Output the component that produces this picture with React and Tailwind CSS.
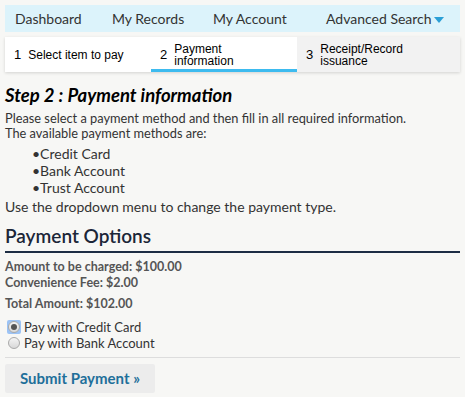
import React, { useState } from "react";

const tabs = [
  { n: "1", label: "Select item to pay", state: "done" },
  { n: "2", label: "Payment\ninformation", state: "active" },
  { n: "3", label: "Receipt/Record\nissuance", state: "todo" },
];

const Radio = ({ checked, focused }) => (
  <span
    className={
      "ml-[2px] flex h-[14px] w-[14px] items-center justify-center rounded-[2px] " +
      (focused ? "bg-[#9cc3f5]" : "")
    }
  >
    <span className="flex h-[12px] w-[12px] items-center justify-center rounded-full border border-[#a9a9a9] bg-[linear-gradient(#f4f4f4,#d8d8d8)]">
      {checked && <span className="h-[6px] w-[6px] rounded-full bg-[#555]" />}
    </span>
  </span>
);

export default function App() {
  const [method, setMethod] = useState("card");

  return (
    <div className="min-h-[397px] w-[465px] bg-[#f7f7f5] px-[5px] pt-[5px] text-[#333] font-['Lato','Open_Sans',sans-serif]">
      {/* NAV */}
      <div className="flex h-[27px] items-center bg-[#dcf3fb] text-[14px] text-[#333]">
        <span className="ml-[10px] w-[97px]">Dashboard</span>
        <span className="w-[101px]">My Records</span>
        <span className="w-[113px]">My Account</span>
        <span className="flex items-center">
          Advanced Search
          <svg width="10" height="6" viewBox="0 0 10 6" className="ml-[2px] mt-[2px]">
            <path d="M0 0h10L5 6z" fill="#2a9fd6" />
          </svg>
        </span>
      </div>

      {/* STEPS */}
      <div className="mt-[5px] flex h-[35px] shadow-[0_1px_3px_rgba(0,0,0,0.15)] font-['Liberation_Sans',Arial,sans-serif] text-[12px] leading-[12px] text-black">
        {tabs.map(t => (
          <div
            key={t.n}
            className={
              "flex w-[146px] items-center gap-[7px] pl-[9px] " +
              (t.state === "active"
                ? "border-b-[3px] border-[#3dbbef] bg-white pt-[3px]"
                : t.state === "todo"
                ? "flex-1 bg-[#f2f2f2]"
                : "bg-white")
            }
          >
            <span className="text-[13px]">{t.n}</span>
            <span className="whitespace-pre-line">{t.label}</span>
          </div>
        ))}
      </div>

      {/* STEP TEXT */}
      <h2 className="mt-[13px] text-[18.5px] font-bold italic leading-[20px] text-black">
        Step 2 : Payment information
      </h2>
      <div className="mt-[6px] text-[12.8px] leading-[15px] text-[#333]">
        <p>Please select a payment method and then fill in all required information.</p>
        <p>The available payment methods are:</p>
        <ul className="mt-[4px] pl-[27px] text-[14px] leading-[17px]">
          <li>•Credit Card</li>
          <li>•Bank Account</li>
          <li>•Trust Account</li>
        </ul>
        <p className="mt-[2px] text-[14px] leading-[17px]">Use the dropdown menu to change the payment type.</p>
      </div>

      {/* PAYMENT OPTIONS */}
      <h3 className="mt-[10px] border-b-[2px] border-[#1d2d44] pb-[4px] text-[19px] font-semibold leading-[22px] text-[#1b2638]">
        Payment Options
      </h3>
      <div className="mt-[6px] text-[12.5px] font-bold leading-[16px] text-[#555]">
        <p>Amount to be charged: $100.00</p>
        <p>Convenience Fee: $2.00</p>
        <p className="mt-[5px]">Total Amount: $102.00</p>
      </div>

      <div className="mt-[7px] border-b border-[#ddd] pb-[6px] text-[13px] leading-[16px] text-[#333]">
        <label className="flex cursor-pointer items-center gap-[3px]" onClick={() => setMethod("card")}>
          <Radio checked={method === "card"} focused={method === "card"} />
          Pay with Credit Card
        </label>
        <label className="flex cursor-pointer items-center gap-[3px]" onClick={() => setMethod("bank")}>
          <Radio checked={method === "bank"} focused={method === "bank"} />
          Pay with Bank Account
        </label>
      </div>

      <button className="mt-[6px] h-[29px] w-[150px] rounded-[2px] bg-[#ececec] text-[15px] font-bold text-[#1e6f9a]">
        Submit Payment »
      </button>
    </div>
  );
}
